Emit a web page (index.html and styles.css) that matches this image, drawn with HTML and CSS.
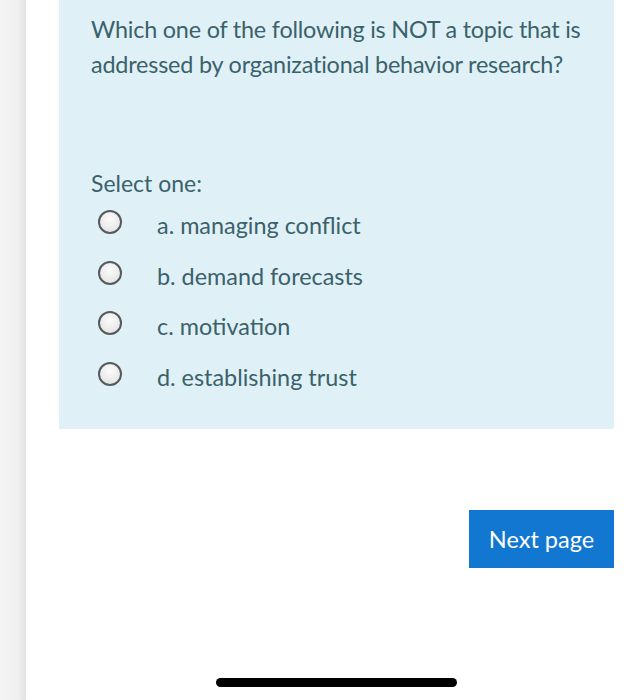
FILE: index.html
```html
<!DOCTYPE html>
<html lang="en">
<head>
<meta charset="utf-8">
<title>Question</title>
<link rel="stylesheet" href="styles.css">
</head>
<body>
<div class="page">
  <div class="side"></div>
  <main class="content">
    <section class="formulation">
      <p class="qtext">Which one of the following is NOT a topic that is addressed by organizational behavior research?</p>
      <div class="prompt">Select one:</div>
      <div class="answers">
        <label class="option"><span class="radio"></span><span class="otext">a. managing conflict</span></label>
        <label class="option"><span class="radio"></span><span class="otext">b. demand forecasts</span></label>
        <label class="option"><span class="radio"></span><span class="otext">c. motivation</span></label>
        <label class="option"><span class="radio"></span><span class="otext">d. establishing trust</span></label>
      </div>
    </section>
    <div class="actions">
      <button class="next" type="button">Next page</button>
    </div>
  </main>
</div>
<div class="homebar"></div>
</body>
</html>
```
FILE: styles.css
```css
html, body {
  margin: 0;
  padding: 0;
  background: #ffffff;
}
body {
  width: 633px;
  height: 700px;
  overflow: hidden;
  position: relative;
  font-family: Lato, "Noto Sans", sans-serif;
  color: #3b616a;
}
.page {
  display: flex;
  height: 700px;
}
.side {
  width: 25px;
  flex: none;
  background: linear-gradient(to right, #f3f3f3 0%, #f0f0f0 70%, #e4e4e4 100%);
  border-right: 1px solid #e6e6e6;
}
.content {
  flex: 1;
  padding: 0 19px 0 33px;
}
.formulation {
  background: #dff1f7;
  height: 429px;
  box-sizing: border-box;
  padding: 12px 20px 0 32px;
}
.qtext {
  margin: 0;
  font-size: 23.4px;
  line-height: 35px;
  letter-spacing: -0.2px;
}
.prompt {
  margin-top: 86px;
  font-size: 23px;
  line-height: 30px;
}
.answers {
  display: flex;
  flex-direction: column;
  margin-top: 2px;
}
.option {
  display: flex;
  align-items: center;
  height: 50.5px;
  font-size: 23.4px;
}
.radio {
  width: 20px;
  height: 20px;
  border: 2px solid #555a5c;
  border-radius: 50%;
  background: radial-gradient(circle at 50% 35%, #fbfbfb 0%, #e6e6e6 75%, #d6d6d6 100%);
  margin: 0 0 6px 7px;
  flex: none;
}
.otext {
  margin-left: 35px;
}
.actions {
  display: flex;
  justify-content: flex-end;
  margin-top: 81px;
}
.next {
  width: 145px;
  height: 58px;
  border: none;
  border-radius: 0;
  background: #1177d1;
  color: #ffffff;
  font-family: Lato, "Noto Sans", sans-serif;
  font-size: 23.5px;
  padding: 0;
}
.homebar {
  position: absolute;
  left: 216px;
  top: 678px;
  width: 241px;
  height: 9px;
  border-radius: 5px;
  background: #000000;
}
```
